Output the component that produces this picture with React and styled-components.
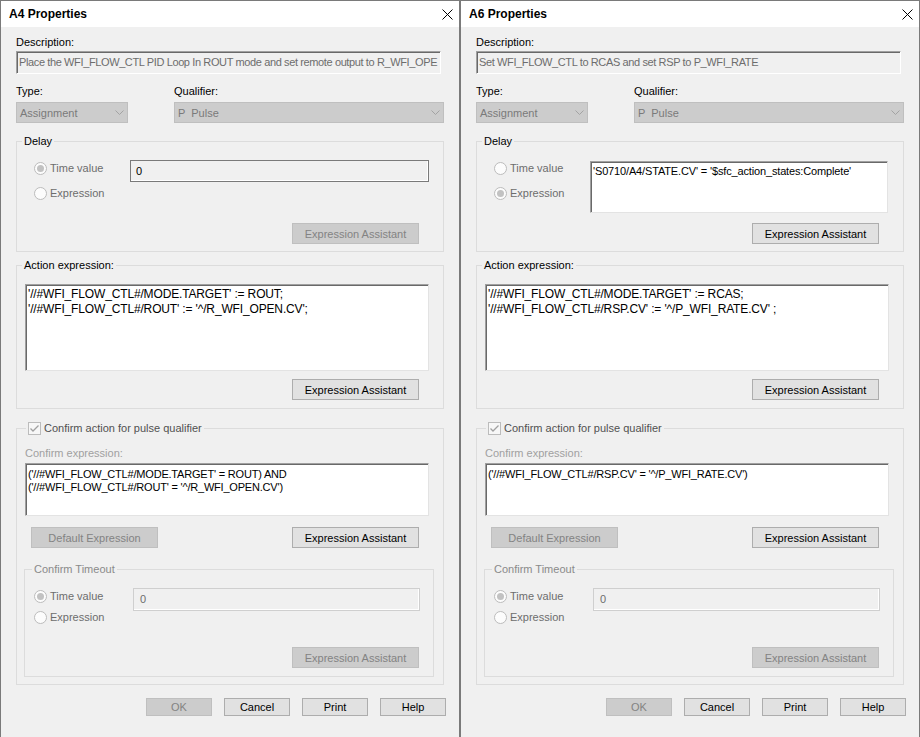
import React from 'react';
import styled, { createGlobalStyle } from 'styled-components';

const Global = createGlobalStyle`
  html, body { margin: 0; padding: 0; background: #f0f0f0; }
  body { font-family: "Liberation Sans", Arial, sans-serif; font-size: 11px; color: #000; }
  * { box-sizing: border-box; }
`;

const Screen = styled.div`
  display: flex;
  width: 920px;
  height: 737px;
  overflow: hidden;
`;

const Window = styled.div`
  width: 460px;
  height: 737px;
  border: 1px solid #7a7a7a;
  border-bottom: none;
  background: #f0f0f0;
  display: flex;
  flex-direction: column;
`;

const TitleBar = styled.div`
  height: 26px;
  flex: none;
  background: #ffffff;
  display: flex;
  align-items: center;
  justify-content: space-between;
  padding: 0 6px 0 8px;
`;

const Title = styled.span`
  font-weight: bold;
  font-size: 12px;
  line-height: 14px;
`;

const Close = styled.span`
  display: flex;
  width: 11px;
  height: 11px;
`;

const Body = styled.div`
  display: flex;
  flex-direction: column;
  padding-left: 15px;
`;

const Label = styled.div`
  line-height: 14px;
  height: 14px;
  margin-top: ${p => p.$mt || 0}px;
  padding-left: ${p => p.$pl || 0}px;
  color: ${p => p.$color || '#000'};
  white-space: nowrap;
`;

const DescBox = styled.div`
  width: 425px;
  height: 23px;
  margin-top: 2px;
  background: #f0f0f0;
  border: 1px solid;
  border-color: #a0a0a0 #ffffff #ffffff #a0a0a0;
  box-shadow: inset 1px 1px 0 #696969;
  color: #6d6d6d;
  padding: 0 0 0 2px;
  line-height: 21px;
  letter-spacing: -0.38px;
  white-space: nowrap;
  overflow: hidden;
`;

const TypeGrid = styled.div`
  display: grid;
  grid-template-columns: 112px 270px;
  column-gap: 46px;
  row-gap: 4px;
  margin-top: 10px;
`;

const Combo = styled.div`
  height: 21px;
  background: #cccccc;
  border: 1px solid #bfbfbf;
  color: #7a7a7a;
  display: flex;
  align-items: center;
  justify-content: space-between;
  padding: 0 3px 0 3px;
  white-space: pre;
`;

const Group = styled.fieldset`
  margin: ${p => p.$mt || 0}px 0 0 ${p => p.$ml || 0}px;
  padding: 0 0 ${p => p.$pb || 0}px 0;
  width: ${p => p.$w}px;
  min-width: 0;
  border: 1px solid #dcdcdc;
`;

const Legend = styled.legend`
  margin-left: ${p => p.$ml || 5}px;
  padding: 0 2px;
  line-height: 14px;
  height: 14px;
  color: ${p => p.$color || '#000'};
  display: flex;
  align-items: center;
  gap: 3px;
  white-space: nowrap;
`;

const TopRow = styled.div`
  display: flex;
  align-items: flex-start;
  margin-top: 11px;
  height: ${p => p.$h}px;
`;

const RadioCol = styled.div`
  display: flex;
  flex-direction: column;
  gap: ${p => p.$gap}px;
  width: ${p => p.$w}px;
  padding-left: ${p => p.$pl}px;
  flex: none;
`;

const RadioRow = styled.div`
  height: 18px;
  display: flex;
  align-items: center;
  gap: 3px;
  color: #6d6d6d;
`;

const RadioDot = styled.span`
  width: 13px;
  height: 13px;
  border-radius: 50%;
  border: 1px solid #bcbcbc;
  background: #fcfcfc;
  display: flex;
  align-items: center;
  justify-content: center;
  flex: none;
  &::after {
    content: '';
    width: 7px;
    height: 7px;
    border-radius: 50%;
    background: ${p => (p.$on ? '#c2c2c2' : 'transparent')};
  }
`;

const ValueBox = styled.div`
  width: ${p => p.$w}px;
  height: ${p => p.$h}px;
  margin-top: 1px;
  background: #f0f0f0;
  border: 1px solid ${p => (p.$disabled ? '#cfcfcf' : '#7a7a7a')};
  box-shadow: inset -1px -1px 0 #ffffff;
  color: ${p => (p.$disabled ? '#6d6d6d' : '#000')};
  padding-left: ${p => (p.$disabled ? 6 : 5)}px;
  line-height: ${p => p.$h - 2}px;
`;

const EditArea = styled.div`
  width: ${p => p.$w}px;
  height: ${p => p.$h}px;
  margin: ${p => p.$mt || 0}px 0 0 ${p => p.$ml || 0}px;
  background: #ffffff;
  border: 1px solid;
  border-color: #a0a0a0 #e3e3e3 #e3e3e3 #a0a0a0;
  box-shadow: inset 1px 1px 0 #696969;
  padding: ${p => p.$pt || 2}px 0 0 2px;
  font-size: ${p => p.$fs || 11}px;
  letter-spacing: ${p => p.$ls || 0}px;
  line-height: ${p => p.$lh || 14}px;
  white-space: pre;
  overflow: hidden;
  flex: none;
`;

const ButtonRow = styled.div`
  display: flex;
  justify-content: ${p => p.$justify || 'flex-end'};
  margin-top: ${p => p.$mt || 0}px;
  padding: 0 ${p => p.$pr || 0}px 0 ${p => p.$pl || 0}px;
`;

const Button = styled.div`
  width: ${p => p.$w || 127}px;
  height: ${p => p.$h || 21}px;
  display: flex;
  align-items: center;
  justify-content: center;
  background: ${p => (p.$disabled ? '#cccccc' : '#e1e1e1')};
  border: 1px solid ${p => (p.$disabled ? '#bfbfbf' : '#adadad')};
  color: ${p => (p.$disabled ? '#838383' : '#000')};
  white-space: nowrap;
`;

const CheckBox = styled.span`
  width: 13px;
  height: 13px;
  border: 1px solid #bcbcbc;
  background: #f7f7f7;
  display: flex;
  align-items: center;
  justify-content: center;
  flex: none;
`;

const Footer = styled.div`
  display: flex;
  justify-content: flex-end;
  gap: 12px;
  margin-top: 13px;
  padding-right: 13px;
`;

const Chevron = () => (
  <svg width="9" height="5" viewBox="0 0 9 5">
    <path d="M0.5 0.5 L4.5 4.5 L8.5 0.5" fill="none" stroke="#a3a3a3" strokeWidth="1" />
  </svg>
);

const CloseIcon = () => (
  <svg width="11" height="11" viewBox="0 0 11 11">
    <path d="M0.5 0.5 L10.5 10.5 M10.5 0.5 L0.5 10.5" fill="none" stroke="#000" strokeWidth="1" />
  </svg>
);

const Check = () => (
  <svg width="11" height="11" viewBox="0 0 11 11">
    <path d="M1.5 5.5 L4 8 L9.5 2.5" fill="none" stroke="#a0a0a0" strokeWidth="1.3" />
  </svg>
);

const Radio = ({ on, children }) => (
  <RadioRow>
    <RadioDot $on={on} />
    <span>{children}</span>
  </RadioRow>
);

const Dialog = ({ d }) => (
  <Window>
    <TitleBar>
      <Title>{d.title}</Title>
      <Close><CloseIcon /></Close>
    </TitleBar>
    <Body>
      <Label $mt={8}>Description:</Label>
      <DescBox>{d.description}</DescBox>
      <TypeGrid>
        <Label>Type:</Label>
        <Label>Qualifier:</Label>
        <Combo><span>Assignment</span><Chevron /></Combo>
        <Combo><span>P  Pulse</span><Chevron /></Combo>
      </TypeGrid>

      <Group $mt={11} $w={428} $pb={7}>
        <Legend>Delay</Legend>
        <TopRow $h={56}>
          <RadioCol $gap={7} $w={113} $pl={17}>
            <Radio on={d.delayMode === 'time'}>Time value</Radio>
            <Radio on={d.delayMode === 'expr'}>Expression</Radio>
          </RadioCol>
          {d.delayMode === 'time' ? (
            <ValueBox $w={299} $h={22}>{d.delayValue}</ValueBox>
          ) : (
            <EditArea $w={298} $h={52} $mt={2} $ls={-0.15}>{d.delayValue}</EditArea>
          )}
        </TopRow>
        <ButtonRow $mt={8} $pr={24}>
          <Button $disabled={d.delayMode === 'time'}>Expression Assistant</Button>
        </ButtonRow>
      </Group>

      <Group $mt={6} $w={428} $pb={8}>
        <Legend>Action expression:</Legend>
        <EditArea $w={404} $h={87} $mt={12} $ml={8} $fs={12} $lh={15} $pt={2} $ls={-0.15}>
          {d.action.join('\n')}
        </EditArea>
        <ButtonRow $mt={8} $pr={24}>
          <Button>Expression Assistant</Button>
        </ButtonRow>
      </Group>

      <Group $mt={12} $w={428} $pb={7}>
        <Legend $ml={9} $color="#505050">
          <CheckBox><Check /></CheckBox>
          <span>Confirm action for pulse qualifier</span>
        </Legend>
        <Label $mt={11} $pl={8} $color="#a0a0a0">Confirm expression:</Label>
        <EditArea $w={404} $h={53} $mt={3} $ml={8} $lh={13} $pt={4} $ls={-0.2}>
          {d.confirm.join('\n')}
        </EditArea>
        <ButtonRow $mt={11} $pl={14} $pr={24} $justify="space-between">
          <Button $disabled>Default Expression</Button>
          <Button>Expression Assistant</Button>
        </ButtonRow>
        <Group $mt={14} $ml={7} $w={410} $pb={8}>
          <Legend $ml={7} $color="#8a8a8a">Confirm Timeout</Legend>
          <TopRow $h={52}>
            <RadioCol $gap={3} $w={108} $pl={9}>
              <Radio on>Time value</Radio>
              <Radio>Expression</Radio>
            </RadioCol>
            <ValueBox $w={287} $h={23} $disabled>0</ValueBox>
          </TopRow>
          <ButtonRow $mt={8} $pr={14}>
            <Button $disabled>Expression Assistant</Button>
          </ButtonRow>
        </Group>
      </Group>

      <Footer>
        <Button $w={66} $h={18} $disabled>OK</Button>
        <Button $w={66} $h={18}>Cancel</Button>
        <Button $w={66} $h={18}>Print</Button>
        <Button $w={66} $h={18}>Help</Button>
      </Footer>
    </Body>
  </Window>
);

const dialogs = [
  {
    title: 'A4 Properties',
    description: 'Place the WFI_FLOW_CTL PID Loop In ROUT mode and set remote output to R_WFI_OPE',
    delayMode: 'time',
    delayValue: '0',
    action: [
      "'//#WFI_FLOW_CTL#/MODE.TARGET' := ROUT;",
      "'//#WFI_FLOW_CTL#/ROUT' := '^/R_WFI_OPEN.CV';",
    ],
    confirm: [
      "('//#WFI_FLOW_CTL#/MODE.TARGET' = ROUT) AND",
      "('//#WFI_FLOW_CTL#/ROUT' = '^/R_WFI_OPEN.CV')",
    ],
  },
  {
    title: 'A6 Properties',
    description: 'Set WFI_FLOW_CTL to RCAS and set RSP to P_WFI_RATE',
    delayMode: 'expr',
    delayValue: "'S0710/A4/STATE.CV' = '$sfc_action_states:Complete'",
    action: [
      "'//#WFI_FLOW_CTL#/MODE.TARGET' := RCAS;",
      "'//#WFI_FLOW_CTL#/RSP.CV' := '^/P_WFI_RATE.CV' ;",
    ],
    confirm: ["('//#WFI_FLOW_CTL#/RSP.CV' = '^/P_WFI_RATE.CV')"],
  },
];

export default function App() {
  return (
    <>
      <Global />
      <Screen>
        {dialogs.map(d => (
          <Dialog key={d.title} d={d} />
        ))}
      </Screen>
    </>
  );
}
